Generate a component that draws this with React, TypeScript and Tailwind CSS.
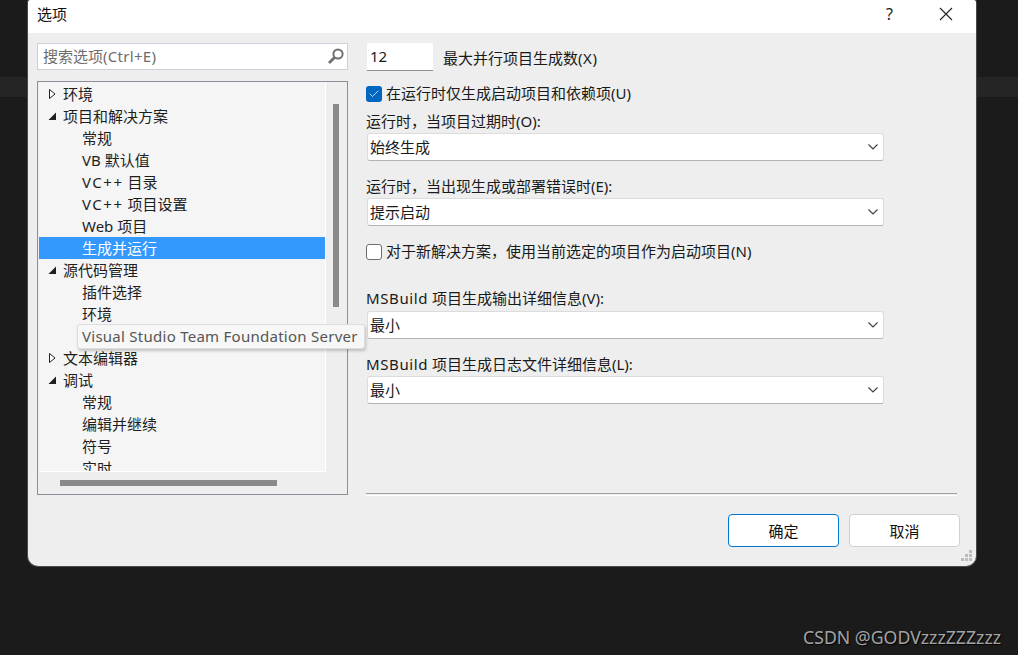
import React from 'react'
import { Check } from 'lucide-react'

type TreeRow = { label: React.ReactNode; level: 0 | 1; arrow?: 'open' | 'closed'; selected?: boolean }

const Wide = ({ children }: { children: React.ReactNode }) => <span className="tracking-[0.6px]">{children}</span>

const treeRows: TreeRow[] = [
  { label: '环境', level: 0, arrow: 'closed' },
  { label: '项目和解决方案', level: 0, arrow: 'open' },
  { label: '常规', level: 1 },
  { label: 'VB 默认值', level: 1 },
  { label: <><span className="tracking-[1.5px]">VC++</span> 目录</>, level: 1 },
  { label: <><span className="tracking-[1.5px]">VC++</span> 项目设置</>, level: 1 },
  { label: 'Web 项目', level: 1 },
  { label: '生成并运行', level: 1, selected: true },
  { label: '源代码管理', level: 0, arrow: 'open' },
  { label: '插件选择', level: 1 },
  { label: '环境', level: 1 },
  { label: '', level: 1 }, // hidden behind the tooltip
  { label: '文本编辑器', level: 0, arrow: 'closed' },
  { label: '调试', level: 0, arrow: 'open' },
  { label: '常规', level: 1 },
  { label: '编辑并继续', level: 1 },
  { label: '符号', level: 1 },
  { label: '实时', level: 1 },
]

const Arrow = ({ type }: { type: 'open' | 'closed' }) =>
  type === 'open' ? (
    <svg width="10" height="10" viewBox="0 0 10 10" className="shrink-0">
      <path d="M9 1.5V9H1.5Z" fill="#1e1e1e" />
    </svg>
  ) : (
    <svg width="10" height="12" viewBox="0 0 10 12" className="shrink-0">
      <path d="M2.5 1.5L8 6L2.5 10.5Z" fill="#fff" stroke="#1e1e1e" />
    </svg>
  )

const Row = ({ row }: { row: TreeRow }) => (
  <div
    className={`flex h-[22px] shrink-0 items-center whitespace-nowrap ${
      row.selected ? 'bg-[#3399ff] text-white' : 'text-[#1e1e1e]'
    } ${row.level === 0 ? 'pl-[8px]' : 'pl-[43px]'}`}
  >
    {row.arrow && (
      <span className="mr-[6px] flex w-[10px] justify-center">
        <Arrow type={row.arrow} />
      </span>
    )}
    <span className="whitespace-pre">{row.label}</span>
  </div>
)

const Select = ({ value, className }: { value: string; className?: string }) => (
  <div
    className={`ml-px flex h-[28px] w-[517px] items-center justify-between rounded-[3px] border border-[#dcdcdc] border-b-[#b4b4b4] bg-white pb-px pl-[2px] pr-[4px] ${className ?? ''}`}
  >
    <span>{value}</span>
    <svg width="10" height="6" viewBox="0 0 10 6" className="mr-[1px]">
      <path d="M0.5 0.5L5 5L9.5 0.5" fill="none" stroke="#444" strokeWidth="1.2" />
    </svg>
  </div>
)

const App = () => {
  return (
    <div
      className="relative h-[655px] w-[1018px] overflow-hidden bg-[#1b1b1b] text-[15px] leading-[22px] text-[#1a1a1a]"
      style={{ fontFamily: '"Noto Sans", "Noto Sans CJK SC", sans-serif' }}
    >
      {/* stripe of the window behind the dialog */}
      <div className="absolute left-0 top-[77px] h-[20px] w-full bg-[#252525]" />

      <div className="relative ml-[28px] flex h-[566px] w-[948px] flex-col overflow-hidden rounded-b-[10px] rounded-t-[3px] bg-[#eeeeee] shadow-[0_0_0_1px_#4a4a4a]">
        <div className="flex h-[33px] shrink-0 items-center justify-between bg-white pb-[5px] pl-[9px] pr-[23px]">
          <span className="text-[#111]">选项</span>
          <div className="flex items-center gap-[46px]">
            <span className="text-[16px] text-[#222]">?</span>
            <svg width="14" height="14" viewBox="0 0 14 14">
              <path d="M1 1L13 13M13 1L1 13" stroke="#222" strokeWidth="1.1" />
            </svg>
          </div>
        </div>

        <div className="flex min-h-0 flex-1 pl-[9px] pt-[10px]">
          <div className="flex w-[311px] shrink-0 flex-col">
            <div className="flex h-[27px] items-center justify-between border border-[#cfcfdc] bg-white pb-px pl-[5px] pr-[2px] text-[#6d6d6d]">
              <span>
                搜索选项<span className="tracking-[0.3px]">(Ctrl+E)</span>
              </span>
              <svg width="18" height="18" viewBox="0 0 18 18">
                <circle cx="11" cy="7" r="4.6" fill="none" stroke="#717171" strokeWidth="2" />
                <path d="M7.5 10.5L2 16" stroke="#717171" strokeWidth="2.8" />
              </svg>
            </div>

            <div className="relative mt-[11px] flex h-[414px] flex-col border border-[#8e8e9a] bg-[#eeeeee] pl-px">
              <div className="h-[390px] w-[287px] overflow-hidden border-b border-r border-white bg-[#f5f5f5] pt-px">
                {treeRows.map((row, i) => (
                  <Row key={i} row={row} />
                ))}
              </div>
              {/* scrollbar thumbs */}
              <div className="absolute left-[295px] top-[22px] h-[203px] w-[6px] bg-[#8a8a8a]" />
              <div className="absolute bottom-[8px] left-[22px] h-[6px] w-[217px] bg-[#8a8a8a]" />
            </div>
          </div>

          <div className="ml-[18px] flex w-[591px] shrink-0 flex-col">
            <div className="flex items-center">
              <div className="ml-px flex h-[28px] w-[66px] items-center rounded-t-[2px] border-b border-[#8f8f8f] bg-white pb-[2px] pl-[3px]">
                12
              </div>
              <span className="ml-[10px] translate-y-px">
                最大并行项目生成数<span className="tracking-[0.6px]">(X)</span>
              </span>
            </div>

            <div className="mt-[12px] flex items-center">
              <span className="flex h-[16px] w-[16px] items-center justify-center rounded-[3px] bg-[#0067c0]">
                <Check size={12} strokeWidth={1.5} color="#fff" />
              </span>
              <span className="ml-[4px] -translate-y-px">在运行时仅生成启动项目和依赖项(U)</span>
            </div>

            <div className="mt-[5px] h-[22px]">运行时，当项目过期时(O):</div>
            <Select value="始终生成" className="mt-[1px]" />

            <div className="mt-[14px] h-[22px]">运行时，当出现生成或部署错误时(E):</div>
            <Select value="提示启动" className="mt-[1px]" />

            <div className="mt-[15px] flex items-center">
              <span className="h-[16px] w-[16px] rounded-[3px] border border-[#6e6e6e] bg-white" />
              <span className="ml-[4px] -translate-y-px">对于新解决方案，使用当前选定的项目作为启动项目(N)</span>
            </div>

            <div className="mt-[24px] h-[22px]">
              <Wide>MSBuild</Wide> 项目生成输出详细信息(V):
            </div>
            <Select value="最小" className="mt-[2px]" />

            <div className="mt-[14px] h-[22px]">
              <Wide>MSBuild</Wide> 项目生成日志文件详细信息(L):
            </div>
            <Select value="最小" className="mt-[1px]" />

            <div className="mt-[89px] h-[2px] border-t border-[#a0a0a0] shadow-[0_1px_0_#fff]" />

            <div className="mt-[19px] flex gap-[10px] pl-[362px]">
              <button className="h-[33px] w-[111px] shrink-0 rounded-[4px] border border-[#0078d4] bg-white text-[#111]">
                确定
              </button>
              <button className="h-[33px] w-[111px] shrink-0 rounded-[4px] border border-[#d0d0d0] bg-white text-[#111]">
                取消
              </button>
            </div>
          </div>
        </div>

        <svg width="14" height="14" viewBox="0 0 14 14" className="absolute bottom-[3px] right-[2px]">
          <path d="M9 1h3v3H9zM5 5h3v3H5zM9 5h3v3H9zM1 9h3v3H1zM5 9h3v3H5zM9 9h3v3H9z" fill="#bdbdbd" />
        </svg>
      </div>

      {/* tooltip over the tree */}
      <div className="absolute left-[77px] top-[324px] flex h-[25px] w-[288px] items-center whitespace-nowrap rounded-[3px] border border-[#dedede] bg-[#f7f7f7] pb-px pl-[4px] tracking-[0.26px] text-[#555] shadow-[1px_2px_3px_rgba(0,0,0,0.2)]">
        Visual Studio Team Foundation Server
      </div>

      <div className="absolute left-[803px] top-[626px] text-[17.7px] text-[#a3a3a3] [text-shadow:1px_1px_1px_#000]">
        CSDN @GODVzzzZZZzzz
      </div>
    </div>
  )
}

export default App
